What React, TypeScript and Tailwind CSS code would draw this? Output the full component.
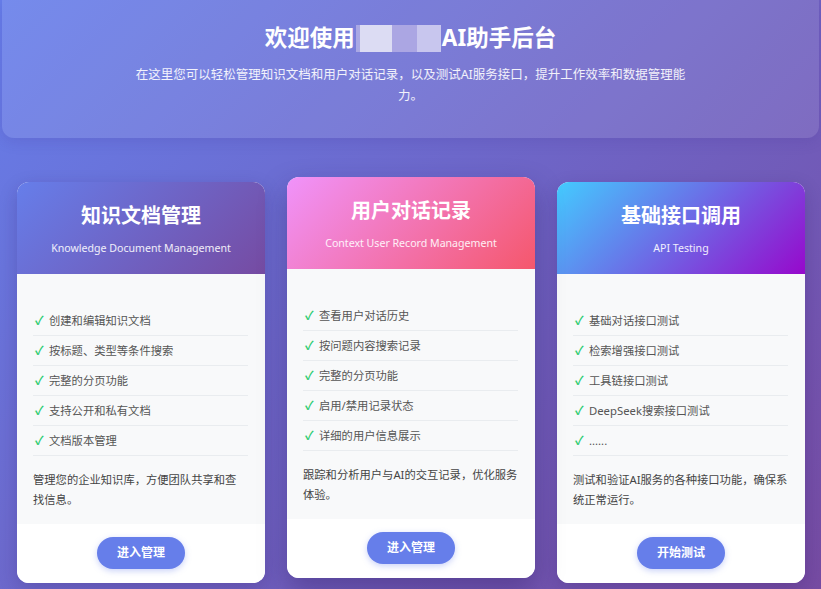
const fontStack = "font-['Noto_Sans','Noto_Sans_CJK_SC',sans-serif]";

type Module = {
  title: string;
  subtitle: string;
  headerClass: string;
  features: string[];
  description: string;
  action: string;
  lifted?: boolean;
};

const modules: Module[] = [
  {
    title: "知识文档管理",
    subtitle: "Knowledge Document Management",
    headerClass: "bg-[linear-gradient(135deg,#667eea_0%,#764ba2_100%)]",
    features: [
      "创建和编辑知识文档",
      "按标题、类型等条件搜索",
      "完整的分页功能",
      "支持公开和私有文档",
      "文档版本管理",
    ],
    description: "管理您的企业知识库，方便团队共享和查找信息。",
    action: "进入管理",
  },
  {
    title: "用户对话记录",
    subtitle: "Context User Record Management",
    headerClass: "bg-[linear-gradient(135deg,#f093fb_0%,#f5576c_100%)]",
    features: [
      "查看用户对话历史",
      "按问题内容搜索记录",
      "完整的分页功能",
      "启用/禁用记录状态",
      "详细的用户信息展示",
    ],
    description: "跟踪和分析用户与AI的交互记录，优化服务体验。",
    action: "进入管理",
    lifted: true,
  },
  {
    title: "基础接口调用",
    subtitle: "API Testing",
    headerClass: "bg-[linear-gradient(135deg,#43cbff_0%,#9708cc_100%)]",
    features: [
      "基础对话接口测试",
      "检索增强接口测试",
      "工具链接口测试",
      "DeepSeek搜索接口测试",
      "......",
    ],
    description: "测试和验证AI服务的各种接口功能，确保系统正常运行。",
    action: "开始测试",
  },
];

function ModuleCard({ module }: { module: Module }) {
  return (
    <div
      className={`flex w-[248px] shrink-0 flex-col overflow-hidden rounded-xl bg-white ${
        module.lifted
          ? "-translate-y-[5px] shadow-[0_12px_28px_rgba(40,20,90,0.35)]"
          : "shadow-[0_6px_18px_rgba(40,20,90,0.22)]"
      }`}
    >
      <div className={`h-[92px] pt-5 text-center text-white ${module.headerClass}`}>
        <h2 className="text-[20px] font-bold leading-7">{module.title}</h2>
        <p className="mt-[10px] text-[10.6px] leading-4 text-white/90">
          {module.subtitle}
        </p>
      </div>

      <div className="bg-[#f8f9fa] pb-[14px] pl-4 pr-[17.5px] pt-8">
        <ul>
          {module.features.map((feature) => (
            <li
              key={feature}
              className="flex items-center border-b border-[#e9ecef] py-[7px] text-[11.3px] leading-[15px] text-[#555]"
            >
              <span className="ml-[2px] mr-[6px] w-[8px] text-[12px] font-bold text-[#2ecc71]">
                ✓
              </span>
              {feature}
            </li>
          ))}
        </ul>
        <p className="mt-[14px] text-[11.3px] leading-5 text-[#444]">
          {module.description}
        </p>
      </div>

      <div className="flex justify-center bg-white pb-[14px] pt-[13px]">
        <button
          type="button"
          className="h-8 w-[88px] rounded-full bg-[#667eea] text-[12px] font-bold text-white shadow-[0_2px_6px_rgba(102,126,234,0.35)]"
        >
          {module.action}
        </button>
      </div>
    </div>
  );
}

export default function App() {
  return (
    <div
      className={`min-h-[589px] w-full bg-[linear-gradient(135deg,#667eea_0%,#764ba2_100%)] ${fontStack}`}
    >
      <header className="mx-[2px] h-[138px] rounded-b-xl bg-white/10 pt-[22px] text-center text-white shadow-[0_4px_14px_rgba(60,40,140,0.15)]">
        <h1 className="flex items-center justify-center text-[22.5px] font-bold leading-8">
          <span>欢迎使用</span>
          <span className="mx-[1px] flex h-[27px] items-stretch">
            <span className="w-[4px] bg-[#aaa8e4]" />
            <span className="w-[32px] bg-[#dcdcf3]" />
            <span className="w-[25px] bg-[#aba6e3]" />
            <span className="w-[24px] bg-[#c8c6ee]" />
          </span>
          <span>AI助手后台</span>
        </h1>
        <p className="mx-auto mt-[10px] max-w-[560px] text-[12.5px] leading-[21px] text-white/90">
          在这里您可以轻松管理知识文档和用户对话记录，以及测试AI服务接口，提升工作效率和数据管理能力。
        </p>
      </header>

      <main className="flex gap-[22px] pl-[17px] pt-[44px]">
        {modules.map((module) => (
          <ModuleCard key={module.title} module={module} />
        ))}
      </main>
    </div>
  );
}
